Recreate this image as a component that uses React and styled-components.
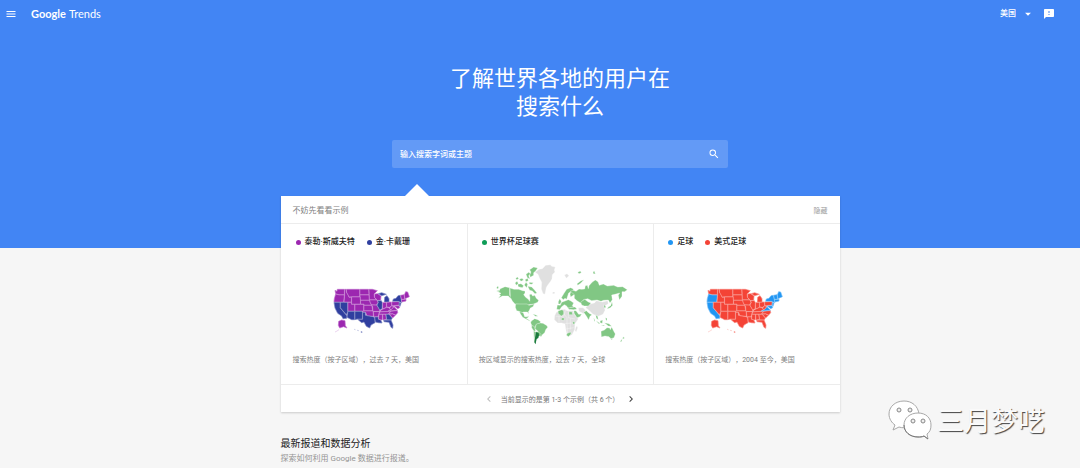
import React from 'react'
import styled, { createGlobalStyle } from 'styled-components'
import { MdMenu, MdArrowDropDown, MdFeedback, MdSearch, MdChevronLeft, MdChevronRight } from 'react-icons/md'

const GlobalStyle = createGlobalStyle`
    * {
        box-sizing: border-box;
    }
    body {
        margin: 0;
        background: #f6f6f6;
        font-family: Roboto, "Noto Sans CJK SC", sans-serif;
        text-spacing-trim: space-all;
        color: #212121;
    }
    button, input, select {
        font-family: inherit;
        color: inherit;
        border: 0;
        background: none;
        padding: 0;
        margin: 0;
    }
    h1, h2, p {
        margin: 0;
        font-weight: 400;
    }
`;

const Page = styled.div`
    position: relative;
    min-height: 100vh;
    overflow: hidden;
`;

const Hero = styled.header`
    background: #4285f4;
    color: white;
    padding-bottom: 80px;
`;

const TopBar = styled.div`
    display: flex;
    align-items: center;
    height: 28px;
    padding: 0 25px 0 5px;
`;

const IconButton = styled.button`
    display: flex;
    align-items: center;
    justify-content: center;
    font-size: ${({ $size }) => $size || 12}px;
    color: ${({ $color }) => $color || 'inherit'};
    cursor: pointer;
`;

const Logo = styled.a`
    display: flex;
    gap: 3px;
    margin-left: 14px;
    font-family: Lato, sans-serif;
    font-size: 11px;
    line-height: 16px;
    color: white;
    text-decoration: none;
`;

const LogoName = styled.span`
    font-weight: ${({ $bold }) => ($bold ? 700 : 400)};
`;

const Country = styled.label`
    display: flex;
    align-items: center;
    gap: 5px;
    margin-left: auto;
    margin-right: 8px;
    font-size: 14px;
`;

const CountrySelect = styled.select`
    appearance: none;
    width: 16px;
    font-size: 8px;
    line-height: 12px;
    font-weight: 500;
    color: white;

    option {
        color: #212121;
    }
`;

const Column = styled.div`
    padding-left: 40px;
`;

const Title = styled.h1`
    width: 224px;
    margin: 37px auto 19px;
    font-size: 22px;
    line-height: 28px;
    text-align: center;
`;

const SearchBox = styled.form`
    display: flex;
    align-items: center;
    width: 60%;
    max-width: 336px;
    height: 28px;
    margin: 0 auto;
    padding: 0 8px;
    border-radius: 2px;
    background: #639af6;
`;

const SearchInput = styled.input`
    flex: 1;
    min-width: 0;
    font-size: 8px;
    font-weight: 500;
    outline: none;

    &::placeholder {
        color: white;
        opacity: 1;
    }
`;

const Content = styled.main`
    width: 100%;
    max-width: 559px;
    margin: -52px auto 0;
`;

const Card = styled.section`
    position: relative;
    background: white;
    box-shadow: 0 1px 2px rgba(0, 0, 0, 0.18);

    &::before {
        content: "";
        position: absolute;
        left: 124px;
        bottom: 100%;
        border: 12px solid transparent;
        border-top: 0;
        border-bottom-color: white;
    }
`;

const CardHeader = styled.div`
    display: flex;
    align-items: center;
    justify-content: space-between;
    height: 28px;
    padding: 0 12px;
    border-bottom: 1px solid #ececec;
    font-size: 8px;
    color: #808080;
`;

const HideButton = styled.button`
    font-size: 7px;
    color: #9e9e9e;
    cursor: pointer;
`;

const Examples = styled.div`
    display: grid;
    grid-template-columns: repeat(3, 1fr);
`;

const Example = styled.article`
    display: flex;
    flex-direction: column;
    height: 160px;
    padding: 12px 12px 18px;

    & + & {
        border-left: 1px solid #ececec;
        padding-left: 11px;
    }
`;

const Legend = styled.div`
    display: flex;
    gap: 12px;
    padding-left: 3px;
    font-size: 8px;
    line-height: 12px;
    font-weight: 500;
`;

const LegendItem = styled.span`
    display: flex;
    align-items: center;
    gap: 4px;

    &::before {
        content: "";
        width: 5px;
        height: 5px;
        border-radius: 50%;
        background: ${({ $color }) => $color};
    }
`;

const MapArea = styled.div`
    flex: 1;
    display: flex;
    justify-content: center;
    align-items: flex-end;
    padding-bottom: ${({ $bottom }) => $bottom}px;
`;

const Caption = styled.p`
    font-size: 7px;
    line-height: 12px;
    color: #808080;
`;

const Pager = styled.div`
    display: flex;
    align-items: center;
    justify-content: center;
    gap: 6px;
    height: 28px;
    border-top: 1px solid #ececec;
    font-size: 7px;
    color: #757575;
`;

const News = styled.section`
    padding-top: 24px;
`;

const NewsTitle = styled.h2`
    font-size: 10px;
    line-height: 16px;
`;

const NewsText = styled.p`
    font-size: 8px;
    line-height: 14px;
    color: #949494;
`;

const Watermark = styled.div`
    position: absolute;
    right: 35px;
    top: 396px;
    display: flex;
    align-items: center;
    gap: 5px;
    font-family: "Noto Sans CJK SC", sans-serif;
    font-weight: 400;
    font-size: 27px;
    line-height: 48px;
    color: #fafafa;
    text-shadow: 1px 1px 1px #444;
`;

// state outlines, [code, points]
const states = [
    ['WA', '30,31 36,34 37,28 58,28 58,44 42,44 32,41'],
    ['OR', '32,42 42,45 58,45 56,66 27,66 28,56'],
    ['CA', '27,67 45,67 45,83 66,108 65,115 54,116 50,108 38,100 30,84'],
    ['NV', '46,67 68,67 68,96 64,104 46,83'],
    ['ID', '59,28 63,28 64,36 70,46 72,52 79,52 79,66 57,66 59,45'],
    ['MT', '64,28 104,28 104,50 80,50 72,51 65,38'],
    ['WY', '80,51 106,51 106,72 80,72'],
    ['UT', '69,67 79,67 79,73 89,73 89,93 69,93'],
    ['CO', '90,73 116,73 116,93 90,93'],
    ['AZ', '69,94 89,94 89,119 80,119 66,112'],
    ['NM', '90,94 112,94 112,117 97,117 90,119'],
    ['ND', '105,28 131,28 132,44 105,44'],
    ['SD', '105,45 132,45 133,60 106,60'],
    ['NE', '107,61 133,61 139,75 117,75 117,72 107,72'],
    ['KS', '117,76 140,76 143,92 117,92'],
    ['OK', '113,93 144,93 145,109 126,107 122,97 113,96'],
    ['TX', '113,97 121,97 121,106 144,110 149,113 150,128 138,135 134,144 124,139 117,126 110,128 98,118 113,118'],
    ['MN', '132,28 142,28 157,32 147,42 148,52 154,59 133,59'],
    ['IA', '134,60 155,60 159,67 154,75 139,74 135,67'],
    ['MO', '140,75 155,75 163,88 164,94 144,94 143,80'],
    ['AR', '145,95 163,95 159,110 147,110'],
    ['LA', '149,111 160,111 160,118 167,119 171,129 160,128 151,126'],
    ['WI', '149,42 158,41 168,48 167,61 157,61 149,52'],
    ['IL', '158,62 169,62 172,68 171,86 164,90 156,76 160,67'],
    ['MI', '178,66 179,52 186,47 192,56 192,66'],
    ['MI', '160,41 170,38 184,43 170,47'],
    ['IN', '173,68 184,67 184,82 173,87'],
    ['OH', '185,67 199,66 200,77 193,82 185,80'],
    ['KY', '167,91 174,87 185,82 193,84 196,89 188,94 166,95'],
    ['TN', '165,96 197,94 190,102 162,102'],
    ['MS', '162,103 172,103 172,119 167,120 161,117'],
    ['AL', '173,103 182,103 184,118 174,120'],
    ['GA', '183,103 192,103 202,114 198,120 185,119'],
    ['FL', '176,121 198,120 204,135 203,145 198,142 192,127 177,125'],
    ['SC', '193,103 203,102 211,106 203,114'],
    ['NC', '191,101 198,94 217,92 218,98 212,105 203,101'],
    ['VA', '190,93 197,90 207,80 217,91'],
    ['WV', '194,84 200,77 206,80 200,88 196,89'],
    ['PA', '200,66 222,65 223,75 201,77'],
    ['NY', '203,64 205,57 213,55 219,47 226,46 229,60 230,68 220,64'],
    ['NJ', '223,67 228,70 225,79 222,75'],
    ['MD', '208,78 222,77 224,83 218,86'],
    ['VT', '227,46 237,44 239,57 229,58'],
    ['MA', '229,59 243,58 243,63 230,66'],
    ['ME', '238,45 242,35 248,36 253,50 240,56'],
    ['AK', '41,124 50,120 60,122 61,137 66,144 56,140 50,142 44,144 40,136'],
];

const UsaMap = ({ main, other, marked }) => (
    <svg width="95" height="60" viewBox="3 0 285 180" role="img" aria-label="美国">
        {states.map(([code, points], i) => {
            const color = marked.includes(code) ? other : main
            return <polygon key={i} points={points} fill={color} stroke={color} strokeWidth="1.5" />
        })}
        <g fill="none" stroke="white" strokeOpacity="0.4" strokeWidth="1.5">
            {states.map(([code, points], i) => (
                <polygon key={i} points={points} />
            ))}
        </g>
        <path d="M30 156l6-3 6-4" stroke={main} strokeOpacity="0.3" strokeWidth="2" fill="none" />
        <path d="M88 148l3 1M97 151l4 1" stroke={marked.includes('HI') ? other : main} strokeOpacity="0.5" strokeWidth="2" />
        <path d="M108 153l5 3-3 3-3-2z" fill={marked.includes('HI') ? other : main} fillOpacity="0.6" />
    </svg>
);

const WorldMap = () => (
    <svg width="150" height="95" viewBox="0 0 450 285" role="img" aria-label="全球">
        <g fill="#e0e0e0" stroke="white" strokeWidth="1">
            <path d="M150 52l12-9 10-2 10-10 14-2 4 5 11 2-3 9 2 6-8 8-1 12-4 8-8 10-5 8-4 21-6-2-5-14 1-20-7-14-4-10z" />
            <path d="M214 172l12-8 14-1 6 4 18 0 6 14 10 11-10 14-1 18-8 15-8 5-7-3-4-20-2-14-10-3-12 0-10-10 1-12z" />
            <path d="M310 148l18-4 6-7 18 4 16-4 2 9-12 8 2 12-6 12-14 6-16-6-14-14-8-6z" />
            <path d="M280 158l14 0 8 8-6 10-14-7zM272 218l4-6 2 6-4 12-4-2zM238 60l8-4 6 6-8 8zM203 111l7 0-2 5-5 0z" />
        </g>
        <g fill="none" stroke="white" strokeWidth="1">
            <path d="M212 184h24l6-20M222 202v-18M236 176l10 12v18M250 168v20l20 4M238 206l24-2 8 4M246 206l2 34M256 190v34M242 222l24-4" />
        </g>
        <g fill="#81c784" stroke="white" strokeWidth="1">
            <path d="M46 101l14-6 14 3v23l8 8-6 1-6-7-8 0-10 0-12 7 7-9-5-2 6-4-8-4z" />
            <path d="M75 99l12 4 14 0 12 4 7 1 0 6-4 5 6 8 8 6 4 6 1-10-2-10 6-2 4 6 6-2 5 9 7 6-3 6-12 5-6 1-9 1-6 5-5-4-30-3-8-9-6-11z" />
            <path d="M98 88l10-2 8 6-4 6-12-3zM90 84l6-5 4 6-6 6zM118 90l5-8 5 6-3 10zM128 94l12 2 8 8 8 10-6 2-8-8-8-2zM103 73l8-3 5 5-8 4zM120 74l8-4 2 7-7 3zM133 82l12 1-4 5-8-1z" />
            <path d="M123 58l8-6 6 4-6 6 4 10-8-4zM134 44l12-8 12 3-6 9-6 5 0 8-10 6-2-8 4-8zM92 70l6-4 3 5-6 3z" />
            <path d="M92 147h34l6 4 16-4-4 8-8 4-3 7-3 4 2 7-5-6-12 0-5 3-8-5-7-2-4-10z" />
            <path d="M103 170l12 3 4 12 8 0 4-3-2 6-5 2 8 5 6 5-14-7-11-6-6-9z" />
            <path d="M139 198l10-7 10 3 8 6-2 5-12 4-2 10-10-6-4-10z" />
            <path d="M140 211l9 4 2 11-3 4-8-12z" />
            <path d="M154 207l12-3 8 1 12 7 2 5-6 7-3 9-7 6-4 6-7-5-2-11-9-8z" />
            <path d="M151 230l9 0 8 8-4 6-8-4zM146 226l5 6-2 20 1 14-3-8z" />
            <path d="M35 97l4-4 2 6-5 3zM34 108l8-2 0 4zM143 177l10 3 6 4-8 0z" />
            <path d="M220 140l4-9 5 8-3 8-6 0zM229 128l8-13 8-12 12-5 8 4-1 10 5 6-12 8-2-8 2-8-6 4-3 9-3 10-5-3-5 4z" />
            <path d="M217 150l9 1 4-9 10-4 10-4 8 4 8 6-4 8 4 4-10 2-3 6-9-12-6-3-8 6-6 9-9-1z" />
            <path d="M256 109l8-3 9 3 9-7 8 1 9-1 2-10 6-1 3 10 2-9 10-11 9-6 8 5 4 11 12-4 12 6 19-2 12 5 15-1 14 9-8 6-8 0 0 14-8 11-3-14 4-7-14 4-10 2 2 14-7 10-5-9-14 1-8 3-12-4-16 2-12-6-12 3-8 11-12-8-8-7 0-11z" />
            <path d="M287 141l12-8 11 8 8 3-8 9-12 0-8-3zM250 158l20-2 6 6-10 2-14-1zM266 167l7 0 8 11 9-1-5 8-9 3-8-12zM296 172l8-5 8 8 9 4-6 5-4 11-7-12z" />
            <path d="M219 168l12-4 5 4 0 10-7 5-9-7zM252 170l9 0 2 9-11 0zM230 189l8 0-1 7-8-1zM263 200l6 0 0 6-5 2zM244 240l3-5 10-4 1 6-8 8z" />
            <path d="M332 180l6 4 2 10-6-4zM326 188l4 8-2 4zM333 197l12 8-3 2zM345 198l8-3-1 10-6-1zM358 203l14 3 8 8-10-1zM362 188l4 2 0 8-4-5zM348 210l12 1-4 2z" />
            <path d="M381 140l2 11-7 7-10 4 4-6 7-4zM357 149l5 5-1 6-4-3zM276 86l12-9 9-3-10 11-9 6zM278 52l8-4 3 5-7 3zM324 51l4-3 3 9-6-1z" />
            <path d="M348 229l10-4 8-7 8 1 2 5 4-8 6 12 5 9-4 11-9 3-6-6-12-2-11 3z" />
            <path d="M377 251l6 0-3 4zM414 245l5 4-6 4zM410 252l-5 9 6-2z" />
        </g>
        <path d="M152 231l9 3 1 7-2 8-5 3-2 9-1 7-4-6 2-13z" fill="#1b7a3d" />
    </svg>
);

const WechatLogo = () => (
    <svg width="46" height="42" viewBox="0 0 46 42" aria-hidden="true">
        <g fill="white" stroke="#a8a8a8" strokeWidth="1">
            <path d="M18 2C9 2 3 8 3 15c0 5 3 9 6 11l-2 5 6-3c3 1 6 1 9 0 7-1 12-7 11-13C32 7 26 2 18 2z" />
            <path d="M32 14c-8 0-14 5-14 12s6 12 14 12c2 0 4 0 6-1l4 3-1-5c3-2 4-5 4-9 0-7-5-12-13-12z" />
        </g>
        <path d="M18 26c0 7 6 12 14 12 2 0 4 0 6-1l4 3" fill="none" stroke="#777" strokeWidth="1" />
        <g fill="#eee" stroke="#888" strokeWidth="1">
            <circle cx="13" cy="11" r="2" />
            <circle cx="24" cy="11" r="2" />
            <circle cx="27" cy="22" r="2" />
            <circle cx="37" cy="22" r="2" />
        </g>
    </svg>
);

const App = () => {
    return (
        <Page>
            <GlobalStyle />
            <Hero>
                <TopBar>
                    <IconButton aria-label="菜单"><MdMenu /></IconButton>
                    <Logo href="#">
                        <LogoName $bold>Google</LogoName>
                        <LogoName>Trends</LogoName>
                    </Logo>
                    <Country>
                        <CountrySelect aria-label="国家" defaultValue="US">
                            <option value="US">美国</option>
                        </CountrySelect>
                        <MdArrowDropDown />
                    </Country>
                    <IconButton aria-label="反馈"><MdFeedback /></IconButton>
                </TopBar>
                <Column>
                    <Title>了解世界各地的用户在搜索什么</Title>
                    <SearchBox>
                        <SearchInput type="text" aria-label="搜索" placeholder="输入搜索字词或主题" />
                        <IconButton type="button" aria-label="搜索"><MdSearch /></IconButton>
                    </SearchBox>
                </Column>
            </Hero>
            <Column>
                <Content>
                    <Card>
                        <CardHeader>
                            不妨先看看示例
                            <HideButton>隐藏</HideButton>
                        </CardHeader>
                        <Examples>
                            <Example>
                                <Legend>
                                    <LegendItem $color="#9c27b0">泰勒·斯威夫特</LegendItem>
                                    <LegendItem $color="#303f9f">金·卡戴珊</LegendItem>
                                </Legend>
                                <MapArea $bottom={14}>
                                    <UsaMap main="#9c27b0" other="#303f9f" marked={['CA', 'NV', 'AZ', 'NM', 'TX', 'LA', 'MI', 'IL', 'NY', 'NJ', 'GA', 'FL', 'HI']} />
                                </MapArea>
                                <Caption>搜索热度（按子区域），过去 7 天，美国</Caption>
                            </Example>
                            <Example>
                                <Legend>
                                    <LegendItem $color="#0f9d58">世界杯足球赛</LegendItem>
                                </Legend>
                                <MapArea $bottom={4}>
                                    <WorldMap />
                                </MapArea>
                                <Caption>按区域显示的搜索热度，过去 7 天，全球</Caption>
                            </Example>
                            <Example>
                                <Legend>
                                    <LegendItem $color="#2196f3">足球</LegendItem>
                                    <LegendItem $color="#f44336">美式足球</LegendItem>
                                </Legend>
                                <MapArea $bottom={14}>
                                    <UsaMap main="#f44336" other="#2196f3" marked={['OR', 'CA', 'NY', 'VT', 'MA', 'ME', 'NJ', 'MD', 'VA']} />
                                </MapArea>
                                <Caption>搜索热度（按子区域），2004 至今，美国</Caption>
                            </Example>
                        </Examples>
                        <Pager>
                            <IconButton $color="#bdbdbd" aria-label="上一页"><MdChevronLeft /></IconButton>
                            <span>当前显示的是第 1-3 个示例（共 6 个）</span>
                            <IconButton $color="#424242" aria-label="下一页"><MdChevronRight /></IconButton>
                        </Pager>
                    </Card>
                    <News>
                        <NewsTitle>最新报道和数据分析</NewsTitle>
                        <NewsText>探索如何利用 Google 数据进行报道。</NewsText>
                    </News>
                </Content>
            </Column>
            <Watermark>
                <WechatLogo />
                三月梦呓
            </Watermark>
        </Page>
    )
}

export default App
